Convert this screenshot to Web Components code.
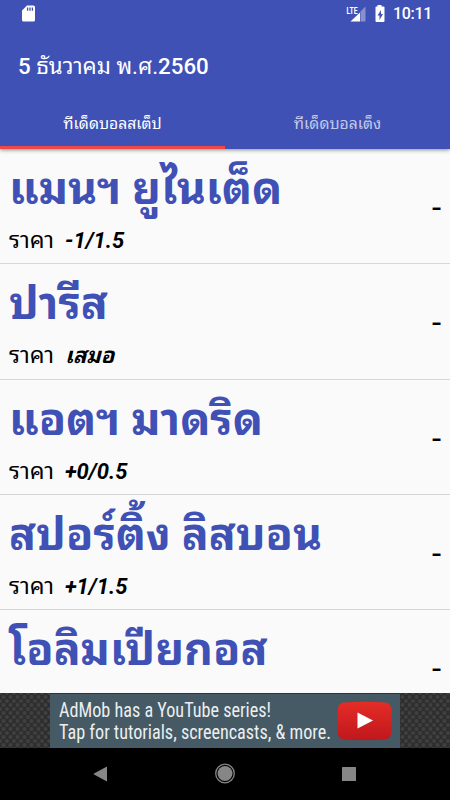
<!DOCTYPE html>
<html lang="th">
<head>
<meta charset="utf-8">
<title>ทีเด็ดบอล</title>
<style>
    body {
        margin: 0;
        width: 450px;
        height: 800px;
        overflow: hidden;
        font-family: Roboto, 'Noto Sans Thai Looped', 'Noto Sans Thai UI', 'Droid Sans Thai', sans-serif;
        background: #fafafa;
    }
</style>
</head>
<body>
<app-screen></app-screen>

<script>
class StatusBar extends HTMLElement {
    constructor() {
        super();
        this.shadow = this.attachShadow({ mode: 'open' });
    }

    connectedCallback() {
        this.shadow.innerHTML = `
            <style>
                :host {
                    display: flex;
                    align-items: center;
                    justify-content: space-between;
                    height: 27px;
                    padding: 0 18px 0 21px;
                    color: white;
                }
                svg { display: block; }
                .right { display: flex; align-items: center; }
                .time { font-size: 16px; font-weight: 500; line-height: 28px; width: 39px; white-space: nowrap; margin-left: 7px; letter-spacing: -.3px; }
            </style>
            <svg width="15" height="18" viewBox="0 0 15 18">
                <path fill="#fff" d="M6 .5h6.500a1.500 1.500 0 0 1 1.500 1.500v13a1.500 1.500 0 0 1-1.500 1.500H2.500A1.500 1.500 0 0 1 1 15V5.500z"/>
                <path stroke="#3f51b5" stroke-width="1.300" d="M6.600 2.500v3.200M9 2.500v3.200M11.400 2.500v3.200"/>
            </svg>
            <div class="right">
                <svg width="40" height="20" viewBox="0 0 40 20">
                    <path fill="#8791cf" d="M14.500 7.500L19.500 2.500v15h-5z"/>
                    <path fill="#fff" d="M4.500 17.500L14 8.500v9z"/>
                    <text x="0.500" y="9.500" font-family="Roboto" font-size="9.500" font-weight="700" textLength="11" lengthAdjust="spacingAndGlyphs" fill="#fff">LTE</text>
                    <path fill="#fff" d="M31.500 1h4v1.500h2q1 0 1 1V17q0 1-1 1h-7q-1 0-1-1V3.500q0-1 1-1h1z"/>
                    <path fill="#3f51b5" d="M35 6L31.500 11.500h2V16l3.500-6h-2z"/>
                </svg>
                <div class="time">10:11</div>
            </div>
        `;
    }
}

class AppBar extends HTMLElement {
    constructor() {
        super();
        this.shadow = this.attachShadow({ mode: 'open' });
    }

    connectedCallback() {
        this.shadow.innerHTML = `
            <style>
                :host {
                    display: block;
                    height: 73px;
                    padding-left: 18px;
                    line-height: 79px;
                    font-size: 22.300px;
                    font-weight: 500;
                    color: white;
                    white-space: nowrap;
                }
                ::slotted(span) { font-weight: 400; }
            </style>
            <slot></slot>
        `;
    }
}

class AppTab extends HTMLElement {
    constructor() {
        super();
        this.shadow = this.attachShadow({ mode: 'open' });
    }

    connectedCallback() {
        this.shadow.innerHTML = `
            <style>
                :host {
                    display: block;
                    flex: 1;
                    box-sizing: border-box;
                    height: 49px;
                    line-height: 47px;
                    font-size: 15.700px;
                    text-align: center;
                    color: rgba(255, 255, 255, .7);
                    border-bottom: 3px solid transparent;
                }
                :host([active]) {
                    color: white;
                    border-bottom-color: #f04848;
                }
            </style>
            <slot></slot>
        `;
    }
}

class MatchRow extends HTMLElement {
    constructor() {
        super();
        this.shadow = this.attachShadow({ mode: 'open' });
    }

    connectedCallback() {
        const price = this.getAttribute('price');

        this.shadow.innerHTML = `
            <style>
                :host {
                    display: flex;
                    align-items: center;
                    justify-content: space-between;
                    flex: none;
                    box-sizing: border-box;
                    height: 115.300px;
                    padding: 0 9px;
                    border-bottom: 1px solid #d6d6d6;
                }
                .info { height: 114px; white-space: nowrap; }
                .team {
                    height: 75px;
                    line-height: 81px;
                    font-size: 44.600px;
                    font-weight: bold;
                    color: #3f51b5;
                }
                .price { height: 36px; line-height: 33px; font-size: 22px; color: #000; display: flex; }
                .price span { width: 56px; font-size: 23.300px; }
                .price b { font-style: italic; }
                .result { font-size: 33px; line-height: 40px; padding-top: 4px; color: #000; }
            </style>
            <div class="info">
                <div class="team"><slot></slot></div>
                ${price ? `<div class="price"><span>ราคา</span><b>${price}</b></div>` : ''}
            </div>
            <div class="result">-</div>
        `;
    }
}

class AdBanner extends HTMLElement {
    constructor() {
        super();
        this.shadow = this.attachShadow({ mode: 'open' });
    }

    connectedCallback() {
        this.shadow.innerHTML = `
            <style>
                :host {
                    display: flex;
                    justify-content: center;
                    flex: none;
                    height: 55px;
                    background-color: #2d2d2d;
                    background-image:
                        radial-gradient(circle at 50% 50%, #404040 1.500px, transparent 2.500px),
                        radial-gradient(circle at 50% 50%, #404040 1.500px, transparent 2.500px);
                    background-size: 7px 8px;
                    background-position: 0 0, 3.500px 4px;
                }
                .ad {
                    display: flex;
                    justify-content: space-between;
                    align-items: center;
                    box-sizing: border-box;
                    width: 350px;
                    padding: 0 8px 0 9px;
                    background: #455a64;
                    border-top: 1px solid #173c4d;
                }
                svg { display: block; overflow: visible; }
            </style>
            <div class="ad">
                <svg width="274" height="54" viewBox="0 0 274 54" font-family="'Roboto Condensed', Roboto" font-size="19.500" fill="#eceff1">
                    <text x="0" y="22.500" textLength="212" lengthAdjust="spacingAndGlyphs">AdMob has a YouTube series!</text>
                    <text x="0" y="45.300" textLength="272" lengthAdjust="spacingAndGlyphs">Tap for tutorials, screencasts, &amp; more.</text>
                </svg>
                <svg width="55" height="40" viewBox="0 0 55 40">
                    <defs>
                        <linearGradient id="red" x2="0" y2="1">
                            <stop stop-color="#e52d27"/>
                            <stop offset="1" stop-color="#bf171d"/>
                        </linearGradient>
                    </defs>
                    <path fill="url(#red)" d="M7 1.500Q27 0 48 1.500Q53.500 2 54.300 8Q55.200 20 54.300 32Q53.500 38 48 38.500Q27 40 7 38.500Q1.500 38 .7 32Q-.2 20 .7 8Q1.500 2 7 1.500z"/>
                    <path fill="#fff" d="M20.500 11.500v16L36 19.500z"/>
                </svg>
            </div>
        `;
    }
}

class NavBar extends HTMLElement {
    constructor() {
        super();
        this.shadow = this.attachShadow({ mode: 'open' });
    }

    connectedCallback() {
        this.shadow.innerHTML = `
            <style>
                :host {
                    display: flex;
                    justify-content: center;
                    align-items: center;
                    gap: 103px;
                    flex: none;
                    height: 52px;
                    background: #000;
                }
                svg { display: block; }
            </style>
            <svg width="20" height="20"><path fill="#868686" d="M3 10.500q-.8-.5 0-1L16 2.500V17.500z"/></svg>
            <svg width="22" height="22"><circle cx="11" cy="10.500" r="9.300" fill="none" stroke="#868686" stroke-width="1.300"/><circle cx="11" cy="10.500" r="7.500" fill="#868686"/></svg>
            <svg width="20" height="20"><rect x="3" y="3" width="14" height="14" rx=".5" fill="#868686"/></svg>
        `;
    }
}

class AppScreen extends HTMLElement {
    constructor() {
        super();
        this.shadow = this.attachShadow({ mode: 'open' });
    }

    connectedCallback() {
        this.shadow.innerHTML = `
            <style>
                :host {
                    display: flex;
                    flex-direction: column;
                    height: 800px;
                }
                header {
                    position: relative;
                    flex: none;
                    background: #3f51b5;
                    box-shadow: 0 1px 4px rgba(0, 0, 0, .45);
                }
                .tabs { display: flex; }
                main {
                    display: flex;
                    flex-direction: column;
                    flex: 1;
                    min-height: 0;
                    overflow: hidden;
                }
            </style>
            <header>
                <status-bar></status-bar>
                <app-bar>5 <span>ธันวาคม พ.ศ.</span>2560</app-bar>
                <div class="tabs">
                    <app-tab active>ทีเด็ดบอลสเต็ป</app-tab>
                    <app-tab>ทีเด็ดบอลเต็ง</app-tab>
                </div>
            </header>
            <main>
                <match-row price="-1/1.5">แมนฯ ยูไนเต็ด</match-row>
                <match-row price="เสมอ">ปารีส</match-row>
                <match-row price="+0/0.5">แอตฯ มาดริด</match-row>
                <match-row price="+1/1.5">สปอร์ติ้ง ลิสบอน</match-row>
                <match-row>โอลิมเปียกอส</match-row>
            </main>
            <ad-banner></ad-banner>
            <nav-bar></nav-bar>
        `;
    }
}

window.customElements.define('status-bar', StatusBar);
window.customElements.define('app-bar', AppBar);
window.customElements.define('app-tab', AppTab);
window.customElements.define('match-row', MatchRow);
window.customElements.define('ad-banner', AdBanner);
window.customElements.define('nav-bar', NavBar);
window.customElements.define('app-screen', AppScreen);
</script>
</body>
</html>
